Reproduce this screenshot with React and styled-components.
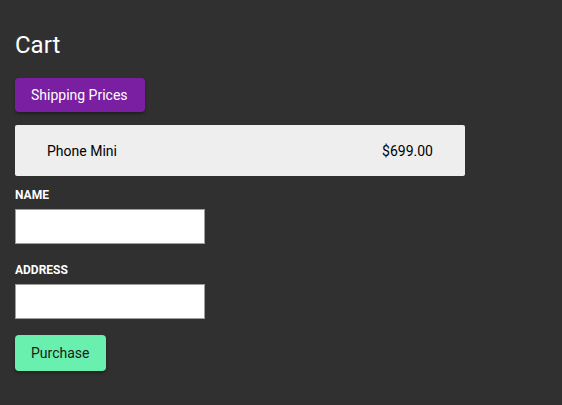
import { createGlobalStyle, styled } from "styled-components";

const GlobalStyle = createGlobalStyle`
    body {
        margin:0;
        background:#303030;
        font-family:Roboto, "Liberation Sans", sans-serif;
        color:#fff;
    }
`;

const items = [{ name: "Phone Mini", price: 699 }];

const App = () => {
    return (
        <Page>
            <GlobalStyle />
            <Title>Cart</Title>
            <Button $bg="#7b1fa2" $color="#fff">Shipping Prices</Button>
            {items.map((item) => (
                <Item key={item.name}>
                    <span>{item.name}</span>
                    <span>${item.price.toFixed(2)}</span>
                </Item>
            ))}
            <Form>
                <Label htmlFor="name">NAME</Label>
                <Input id="name" type="text" />
                <Label htmlFor="address">ADDRESS</Label>
                <Input id="address" type="text" />
                <Button $bg="#69f0ae" $color="#1a1a1a" $tall type="button">Purchase</Button>
            </Form>
        </Page>
    );
}

const Page = styled.div`
    padding:28px 15px 20px;
`;

const Title = styled.h2`
    margin:0 0 16px;
    font-size:24px;
    line-height:34px;
    font-weight:400;
`;

const Button = styled.button`
    display:block;
    height:${props => props.$tall ? "36px" : "34px"};
    padding:0 17px 0 16px;
    border:none;
    border-radius:4px;
    background:${props => props.$bg};
    color:${props => props.$color};
    font-family:inherit;
    font-size:14px;
    box-shadow:0 2px 3px rgba(0,0,0,.35);
    cursor:pointer;
`;

const Item = styled.div`
    width:450px;
    height:51px;
    margin-top:13px;
    box-sizing:border-box;
    display:flex;
    justify-content:space-between;
    align-items:center;
    padding:0 32px;
    background:#eeeeee;
    border-radius:2px;
    color:#000;
    font-size:14px;
`;

const Form = styled.form`
    display:flex;
    flex-direction:column;
    align-items:flex-start;
    padding-top:12px;
`;

const Label = styled.label`
    font-size:12px;
    font-weight:700;
    line-height:14px;
    margin-bottom:7px;
`;

const Input = styled.input`
    width:190px;
    height:35px;
    box-sizing:border-box;
    border:1px solid #9e9e9e;
    margin-bottom:19px;
    font-family:inherit;
    font-size:14px;
    &:last-of-type {
        margin-bottom:16px;
    }
`;

export default App;
